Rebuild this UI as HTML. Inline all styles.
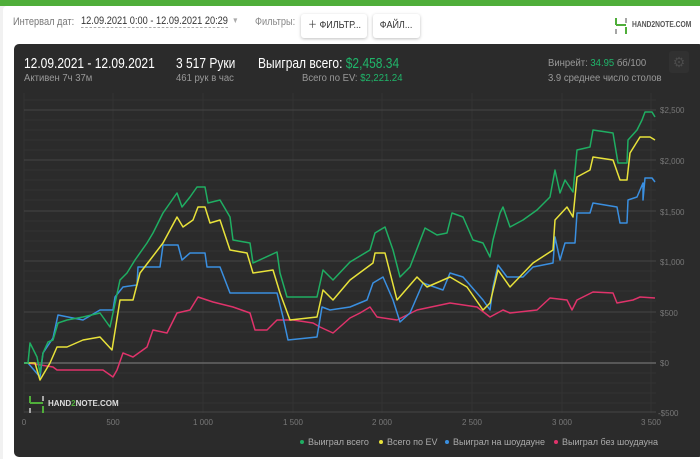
<!DOCTYPE html>
<html><head><meta charset="utf-8"><style>
body{margin:0;width:700px;height:459px;overflow:hidden;background:#f1f1f1;font-family:"Liberation Sans Narrow","Liberation Sans",sans-serif;position:relative}
.top{position:absolute;left:0;top:0;width:700px;height:6px;background:#4fae3a}
.wp{position:absolute;left:3px;top:6px;width:697px;height:453px;background:#fff;border-radius:4px 0 0 0}
.t{position:absolute;white-space:nowrap;transform:scaleX(.84);transform-origin:0 0}
.s{position:absolute;white-space:nowrap;transform:scaleX(.95);transform-origin:0 0;font-size:10px;color:#999}
.b{position:absolute;white-space:nowrap;transform:scaleX(.8);transform-origin:0 0;font-size:15px;color:#fff}
.btn{position:absolute;background:#fff;border-radius:3px;box-shadow:0 1px 3px rgba(0,0,0,.25);font-size:10px;color:#333;text-align:center;line-height:24px}
.dark{position:absolute;left:14px;top:44px;width:690px;height:413px;background:#2b2b2b;border-radius:5px}
.g{color:#20b56a}
</style></head><body>
<div class="top"></div>
<div class="wp"></div>
<div class="t" style="left:13px;top:16px;font-size:11px;color:#777">Интервал дат:</div>
<div class="t" style="left:81px;top:15px;font-size:11px;color:#333;border-bottom:1px dashed #aaa">12.09.2021 0:00 - 12.09.2021 20:29</div>
<div class="t" style="left:232px;top:16px;font-size:8px;color:#aaa">▼</div>
<div class="t" style="left:255px;top:16px;font-size:11px;color:#888">Фильтры:</div>
<div class="btn" style="left:301px;top:14px;width:66px"><span style="display:inline-block;transform:scaleX(.9)">＋ ФИЛЬТР...</span></div>
<div class="btn" style="left:373px;top:14px;width:47px"><span style="display:inline-block;transform:scaleX(.9)">ФАЙЛ...</span></div>
<svg style="position:absolute;left:614px;top:17px" width="14" height="18"><path d="M2 1v7M2 8h10M12 10v7" stroke="#4fae3a" stroke-width="2" fill="none"/><path d="M12 1v5M2 12v5" stroke="#888" stroke-width="1.5"/></svg>
<div class="t" style="left:632px;top:20px;font-size:8px;font-weight:bold;color:#555">HAND2NOTE.COM</div>
<div class="dark"></div>
<div class="b" style="left:24px;top:55px">12.09.2021 - 12.09.2021</div>
<div class="s" style="left:24px;top:73px">Активен 7ч 37м</div>
<div class="b" style="left:176px;top:55px">3 517 Руки</div>
<div class="s" style="left:176px;top:73px">461 рук в час</div>
<div class="b" style="left:258px;top:55px">Выиграл всего: <span class="g">$2,458.34</span></div>
<div class="s" style="left:302px;top:73px">Всего по EV: <span class="g">$2,221.24</span></div>
<div class="s" style="left:548px;top:58px">Винрейт: <span class="g">34.95</span> бб/100</div>
<div class="s" style="left:548px;top:73px">3.9 среднее число столов</div>
<div style="position:absolute;left:669px;top:51px;width:20px;height:22px;border-radius:3px;background:#313131;color:#4a4a4a;font-size:14px;text-align:center;line-height:22px">⚙</div>
<svg style="position:absolute;left:0;top:0" width="700" height="459">
<g stroke="#333" stroke-width="1">
<path d="M24 93V413M113 93V413M203 93V413M293 93V413M382 93V413M472 93V413M562 93V413M651 93V413"/>
<path d="M24 120H656M24 130H656M24 140H656M24 150H656M24 170H656M24 180H656M24 190H656M24 200H656M24 221H656M24 231H656M24 241H656M24 251H656M24 271H656M24 281H656M24 291H656M24 301H656M24 322H656M24 332H656M24 342H656M24 352H656M24 373H656M24 383H656M24 393H656M24 403H656M24 100H656"/>
</g>
<g stroke="#404040" stroke-width="1.2"><path d="M24 110H656M24 160H656M24 211H656M24 261H656M24 312H656M24 412H656"/></g>
<path d="M24 363H656" stroke="#666" stroke-width="1.5"/>
<g fill="none" stroke-width="1.5" stroke-linejoin="round">
<polyline stroke="#e0336b" points="24,363 28,363 53,367 57,370 83,370 103,370 113,377 117,370 123,353 133,357 147,347 153,330 167,333 177,313 190,310 198,297 213,302 233,307 250,313 255,330 267,330 277,320 293,320 313,323 320,327 333,333 350,318 360,313 370,307 377,317 397,320 417,310 450,303 477,307 490,317 503,310 510,313 537,310 550,298 567,300 572,310 577,300 593,292 613,293 617,303 633,300 640,297 655,298"/>
<polyline stroke="#3a8fe0" points="24,363 28,363 40,377 43,353 53,338 58,315 83,320 100,310 113,310 115,297 123,287 137,285 138,267 160,267 163,245 178,245 182,260 190,253 205,253 207,267 220,267 230,293 277,293 283,317 288,340 317,337 322,307 330,310 350,307 367,300 373,283 383,277 393,300 400,322 410,313 423,283 443,290 450,273 463,277 483,300 490,310 493,287 498,265 507,277 523,277 533,267 553,263 555,237 560,260 565,243 575,243 577,213 590,213 593,203 617,207 620,223 627,223 628,200 637,197 643,183 643,200 645,178 652,178 655,182"/>
<polyline stroke="#e8e23a" points="24,363 28,363 35,363 40,380 50,363 57,347 67,347 83,340 100,337 112,350 120,300 133,300 140,273 150,260 163,243 177,217 183,227 193,220 198,207 205,207 210,223 220,220 230,250 247,253 253,273 273,270 280,293 290,320 317,317 323,290 333,300 350,280 373,263 375,253 385,253 397,300 417,277 427,287 450,277 467,287 483,310 490,303 498,270 510,287 533,263 553,250 555,220 567,207 573,217 577,177 590,170 593,157 613,160 620,180 627,180 630,153 640,137 650,137 655,140"/>
<polyline stroke="#1fae62" points="24,363 28,363 30,343 37,357 40,373 43,353 48,342 53,340 58,323 67,320 83,317 100,313 110,327 120,280 127,273 135,260 147,243 153,233 163,213 177,193 182,207 190,197 197,187 205,187 208,203 220,200 230,217 233,240 250,243 253,263 277,252 280,273 287,297 317,297 323,270 333,280 350,262 370,250 375,233 385,227 393,250 400,277 410,267 425,228 437,235 447,233 452,213 463,217 473,240 483,243 490,257 493,240 500,213 503,207 510,227 523,220 537,210 550,197 555,170 560,193 565,180 573,192 577,150 590,147 593,130 613,133 618,163 627,163 628,140 637,130 642,120 645,112 652,112 655,117"/>
</g>
<g font-size="8" fill="#777" font-family="Liberation Sans">
<text x="660" y="113">$2,500</text><text x="660" y="164">$2,000</text><text x="660" y="215">$1,500</text><text x="660" y="265">$1,000</text><text x="660" y="316">$500</text><text x="660" y="366">$0</text><text x="658" y="416">-$500</text>
<g text-anchor="middle"><text x="24" y="425">0</text><text x="113" y="425">500</text><text x="203" y="425">1 000</text><text x="293" y="425">1 500</text><text x="382" y="425">2 000</text><text x="472" y="425">2 500</text><text x="562" y="425">3 000</text><text x="651" y="425">3 500</text></g>
</g>
<path d="M30 396v7M30 403h13M43 406v7" stroke="#4fae3a" stroke-width="2" fill="none"/><path d="M43 396v5M30 408v5" stroke="#ccc" stroke-width="1.5"/>
<text x="48" y="406" font-size="8" font-weight="bold" fill="#ddd" font-family="Liberation Sans">HAND<tspan fill="#4fae3a">2</tspan>NOTE.COM</text>
<g font-size="9" fill="#aaa" font-family="Liberation Sans">
<circle cx="302" cy="442" r="2" fill="#1fae62"/><text x="308" y="445">Выиграл всего</text>
<circle cx="381" cy="442" r="2" fill="#e8e23a"/><text x="387" y="445">Всего по EV</text>
<circle cx="447" cy="442" r="2" fill="#3a8fe0"/><text x="453" y="445">Выиграл на шоудауне</text>
<circle cx="556" cy="442" r="2" fill="#e0336b"/><text x="562" y="445">Выиграл без шоудауна</text>
</g>
</svg>
</body></html>
